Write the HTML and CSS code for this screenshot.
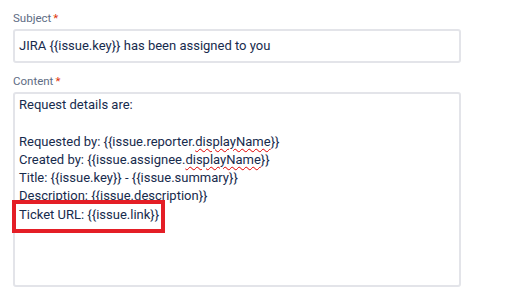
FILE: index.html
```html
<!DOCTYPE html>
<html>
<head>
<meta charset="utf-8">
<link rel="stylesheet" href="styles.css">
</head>
<body>
<div class="form">
  <div class="field">
    <label class="label">Subject<span class="req">*</span></label>
    <div class="input">JIRA {{issue.key}} has been assigned to you</div>
  </div>
  <div class="field">
    <label class="label">Content<span class="req">*</span></label>
    <div class="textarea">
      <div class="line">Request details are:</div>
      <div class="line">&nbsp;</div>
      <div class="line">Requested by: {{issue.reporter.<span class="spell">displayName</span>}}</div>
      <div class="line">Created by: {{issue.assignee.<span class="spell">displayName</span>}}</div>
      <div class="line">Title: {{issue.key}} - {{issue.summary}}</div>
      <div class="line">Description: {{issue.description}}</div>
      <div class="line"><span class="hl">Ticket URL: {{issue.link}}</span></div>
    </div>
  </div>
</div>
</body>
</html>
```
FILE: styles.css
```css
html, body {
  margin: 0;
  padding: 0;
  background: #ffffff;
}
body {
  font-family: "Roboto", "Liberation Sans", sans-serif;
  color: #172b4d;
}
.form {
  padding: 11px 0 0 13px;
  width: 448px;
  display: flex;
  flex-direction: column;
  gap: 11px;
}
.field {
  display: flex;
  flex-direction: column;
  gap: 4px;
}
.label {
  font-size: 11.5px;
  line-height: 14px;
  color: #5e6c84;
  font-weight: 400;
}
.req {
  color: #de350b;
  margin-left: 2px;
}
.input {
  height: 34px;
  box-sizing: border-box;
  border: 2px solid #e3e4e9;
  border-radius: 3px;
  padding: 0 4px;
  font-size: 13px;
  line-height: 30px;
  white-space: nowrap;
}
.textarea {
  height: 195px;
  box-sizing: border-box;
  border: 2px solid #e3e4e9;
  border-radius: 3px;
  padding: 2px 4px;
  font-size: 13px;
  line-height: 18.3px;
}
.spell {
  text-decoration: underline wavy #e00000;
  text-decoration-thickness: 1px;
  text-underline-offset: 2px;
}
.hl {
  display: inline-block;
  border: 4px solid #e41e26;
  padding: 2px 2px 5px 3px;
  margin: -6px -6px -9px -7px;
}
```
